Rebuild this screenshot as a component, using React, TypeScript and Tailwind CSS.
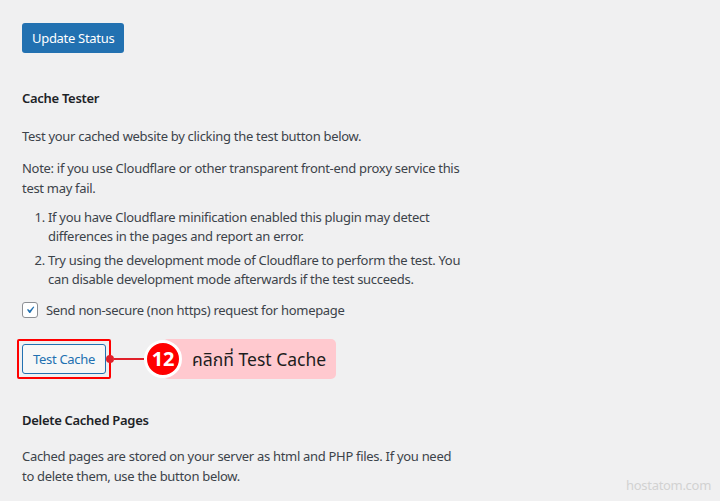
export default function App() {
  return (
    <div
      className="relative min-h-[501px] w-[720px] overflow-hidden bg-[#f0f0f1] px-[22px] pt-[23px] text-[13px] leading-[20px] tracking-[-0.3px] text-[#3c434a]"
      style={{ fontFamily: '"Noto Sans", "Open Sans", sans-serif' }}
    >
      <button className="h-[30px] rounded-[3px] bg-[#2271b1] px-[10px] text-[13px] text-white">
        Update Status
      </button>

      <h2 className="mt-[35px] font-semibold text-[#1d2327]">Cache Tester</h2>

      <p className="mt-[18px]">Test your cached website by clicking the test button below.</p>

      <p className="mt-[12px]">
        <span className="block">Note: if you use Cloudflare or other transparent front-end proxy service this</span>
        <span className="block">test may fail.</span>
      </p>

      <ol className="mt-[10px] list-decimal pl-[26px] leading-[19px]">
        <li>
          <span className="block">If you have Cloudflare minification enabled this plugin may detect</span>
          <span className="block">differences in the pages and report an error.</span>
        </li>
        <li className="mt-[5px]">
          <span className="block">Try using the development mode of Cloudflare to perform the test. You</span>
          <span className="block">can disable development mode afterwards if the test succeeds.</span>
        </li>
      </ol>

      <label className="mt-[11px] flex items-center gap-[8px]">
        <span className="flex h-[16px] w-[16px] items-center justify-center rounded-[3px] border border-[#8c8f94] bg-white">
          <svg viewBox="0 0 20 20" className="h-[18px] w-[18px]">
            <path d="M14.83 4.89l1.34.94-5.81 8.38H9.02L5.78 9.67l1.34-1.25 2.57 2.4z" fill="#2271b1" />
          </svg>
        </span>
        <span>Send non-secure (non https) request for homepage</span>
      </label>

      <div className="mt-[18px] flex items-center">
        <div className="-ml-[5px] rounded-[2px] border-2 border-[#ff0000] p-[3px]">
          <button className="h-[30px] rounded-[3px] border border-[#2271b1] bg-[#f6f7f7] px-[10px] text-[13px] text-[#2271b1]">
            Test Cache
          </button>
        </div>
        <span className="-ml-[5px] h-[8px] w-[8px] rounded-full bg-[#e0202a]" />
        <span className="h-[2px] w-[30px] bg-[#e0202a]" />
        <div className="flex h-[41px] items-center">
          <span className="relative z-10 flex h-[38px] w-[38px] items-center justify-center rounded-full border-[3px] border-white bg-[#ff0000] text-[20px] font-bold tracking-normal text-white">
            12
          </span>
          <span
            className="-ml-[19px] flex h-[40px] items-center rounded-[5px] bg-[#ffc9cf] pl-[29px] pr-[10px] text-[17.5px] tracking-normal text-[#1d1d1d]"
            style={{ fontFamily: '"Noto Sans", "Noto Sans Thai", "DejaVu Sans", sans-serif' }}
          >
            คลิกที่ Test Cache
          </span>
        </div>
      </div>

      <h2 className="mt-[31px] font-semibold text-[#1d2327]">Delete Cached Pages</h2>

      <p className="mt-[16px]">
        <span className="block">Cached pages are stored on your server as html and PHP files. If you need</span>
        <span className="block">to delete them, use the button below.</span>
      </p>

      <div className="absolute bottom-[6px] right-[9px] text-[13px] text-[#d2d2d2]">hostatom.com</div>
    </div>
  );
}
